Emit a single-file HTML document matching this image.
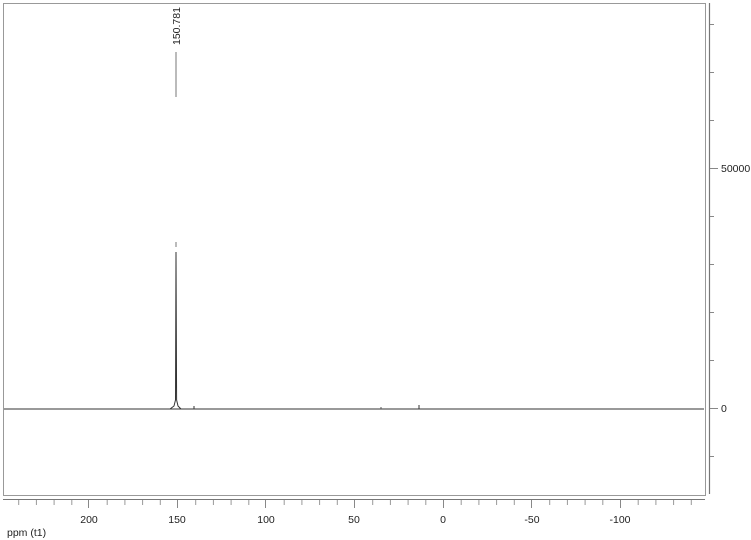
<!DOCTYPE html>
<html><head><meta charset="utf-8"><style>
html,body{margin:0;padding:0;background:#fff;}
svg{display:block;font-family:"Liberation Sans",Arial,sans-serif;}
</style></head><body>
<svg width="751" height="540" viewBox="0 0 751 540" xmlns="http://www.w3.org/2000/svg">
<rect x="3.5" y="3.5" width="702" height="492" fill="#fff" stroke="#999" stroke-width="1"/>
<!-- right axis -->
<line x1="709.5" y1="3" x2="709.5" y2="494" stroke="#777" stroke-width="1.2"/>
<g stroke="#888" stroke-width="1">
<line x1="710" y1="24.5" x2="714" y2="24.5"/>
<line x1="710" y1="72.5" x2="714" y2="72.5"/>
<line x1="710" y1="120.5" x2="714" y2="120.5"/>
<line x1="710" y1="168.5" x2="718" y2="168.5"/>
<line x1="710" y1="216.5" x2="714" y2="216.5"/>
<line x1="710" y1="264.5" x2="714" y2="264.5"/>
<line x1="710" y1="312.5" x2="714" y2="312.5"/>
<line x1="710" y1="360.5" x2="714" y2="360.5"/>
<line x1="710" y1="408.5" x2="718" y2="408.5"/>
<line x1="710" y1="456.5" x2="714" y2="456.5"/>
</g>
<text x="721" y="172" font-size="10.5" fill="#222">50000</text>
<text x="721" y="412" font-size="10.5" fill="#222">0</text>
<!-- baseline -->
<line x1="4" y1="409" x2="704" y2="409" stroke="#333" stroke-width="1"/>
<path d="M170 409 L174 406 L175.5 400 L176 252 L176.6 400 L178 406 L181 409" fill="none" stroke="#333" stroke-width="1"/>
<line x1="194" y1="409" x2="194" y2="406" stroke="#333"/>
<line x1="419" y1="409" x2="419" y2="405" stroke="#333"/>
<line x1="381" y1="409" x2="381" y2="407" stroke="#555"/>
<line x1="176" y1="242" x2="176" y2="247" stroke="#777"/>
<line x1="176" y1="52" x2="176" y2="97" stroke="#777"/>
<text transform="translate(180,45) rotate(-90)" font-size="10.5" fill="#222">150.781</text>
<!-- bottom axis -->
<line x1="3" y1="499.5" x2="705" y2="499.5" stroke="#777" stroke-width="1"/>
<g stroke="#888" stroke-width="1">
<line x1="88.5" y1="500" x2="88.5" y2="508"/>
<line x1="177.5" y1="500" x2="177.5" y2="508"/>
<line x1="265.5" y1="500" x2="265.5" y2="508"/>
<line x1="354.5" y1="500" x2="354.5" y2="508"/>
<line x1="443.5" y1="500" x2="443.5" y2="508"/>
<line x1="531.5" y1="500" x2="531.5" y2="508"/>
<line x1="620.5" y1="500" x2="620.5" y2="508"/>
</g>
<g stroke="#999" stroke-width="1" id="minor"></g>
<script>
var g=document.getElementById('minor');
for(var p=260;p>=-150;p-=10){if(p%50===0)continue;var x=443+(-p)*1.77+0.5;x=443-p*1.77+0.5;if(x<5||x>703)continue;
var l=document.createElementNS('http://www.w3.org/2000/svg','line');l.setAttribute('x1',x);l.setAttribute('x2',x);l.setAttribute('y1',500);l.setAttribute('y2',505);g.appendChild(l);}
</script>
<g font-size="10.5" fill="#222" text-anchor="middle">
<text x="89" y="523">200</text>
<text x="177" y="523">150</text>
<text x="266" y="523">100</text>
<text x="354" y="523">50</text>
<text x="443" y="523">0</text>
<text x="532" y="523">-50</text>
<text x="620" y="523">-100</text>
</g>
<text x="7" y="536" font-size="10.5" fill="#222">ppm (t1)</text>
</svg>
</body></html>
